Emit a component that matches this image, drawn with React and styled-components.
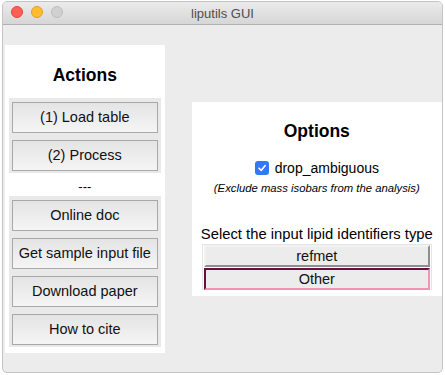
import React, { useState } from "react";
import styled, { createGlobalStyle } from "styled-components";

const GlobalStyle = createGlobalStyle`
  html, body {
    margin: 0;
    padding: 0;
    background: #ffffff;
  }
  body {
    font-family: "Liberation Sans", Arial, sans-serif;
    font-size: 13px;
    color: #000;
  }
`;

const Window = styled.div`
  margin: 1px 2px 2px 2px;
  width: 441px;
  height: 372px;
  box-sizing: border-box;
  border: 1px solid #c4c4c4;
  border-radius: 5px;
  background: #ececec;
  overflow: hidden;
  display: flex;
  flex-direction: column;
`;

const TitleBar = styled.div`
  height: 22px;
  flex: none;
  position: relative;
  display: flex;
  align-items: center;
  justify-content: center;
  background: linear-gradient(#ebebeb, #d6d6d6);
  border-bottom: 1px solid #b1b1b1;
  color: #4d4d4d;
  font-size: 13px;
`;

const Lights = styled.div`
  position: absolute;
  left: 8px;
  top: 4px;
  display: flex;
  gap: 8px;
`;

const Light = styled.span`
  width: 12px;
  height: 12px;
  border-radius: 50%;
  box-sizing: border-box;
  background: ${(p) => p.$color};
  border: 1px solid ${(p) => p.$edge};
`;

const Content = styled.div`
  flex: 1;
  display: flex;
  align-items: center;
  padding-left: 2px;
`;

const Panel = styled.div`
  background: #ffffff;
  display: flex;
  flex-direction: column;
  align-items: center;
  box-sizing: border-box;
`;

const ActionsPanel = styled(Panel)`
  width: 160px;
  height: 308px;
  padding-top: 19px;
`;

const OptionsPanel = styled(Panel)`
  width: 251px;
  height: 194px;
  margin-left: 27px;
  padding-top: 18px;
`;

const Heading = styled.div`
  font-weight: bold;
  font-size: 17.5px;
  line-height: 22px;
  height: 22px;
`;

const Group = styled.div`
  background: #e9e9e9;
  width: 152px;
  box-sizing: border-box;
  padding: 4px 3px 2px;
  display: flex;
  flex-direction: column;
  gap: 7px;
  margin-top: ${(p) => p.$top}px;
`;

const ActionButton = styled.button`
  height: 31px;
  width: 146px;
  box-sizing: border-box;
  border: 1px solid #a8a8a8;
  background: linear-gradient(#e4e4e4, #f5f5f5);
  font-family: "Liberation Sans", Arial, sans-serif;
  font-size: 14.5px;
  color: #111;
  padding: 0;
  cursor: pointer;
`;

const Separator = styled.div`
  line-height: 14px;
  height: 14px;
  margin-top: 7px;
  font-size: 13px;
`;

const CheckRow = styled.label`
  margin-top: 18px;
  display: flex;
  align-items: center;
  gap: 6px;
  height: 16px;
  font-size: 14px;
`;

const CheckBox = styled.span`
  width: 14px;
  height: 14px;
  border-radius: 3px;
  background: #3478f6;
  display: flex;
  align-items: center;
  justify-content: center;
`;

const Note = styled.div`
  margin-top: 5px;
  font-style: italic;
  font-size: 11.3px;
  line-height: 14px;
`;

const SelectLabel = styled.div`
  margin-top: 31px;
  font-size: 14.8px;
  line-height: 16px;
`;

const Choices = styled.div`
  margin-top: 2px;
  display: flex;
  flex-direction: column;
  gap: 1px;
  width: 226px;
  padding: 0 1px;
  border: 1px solid #e4e4e4;
  border-bottom: none;
`;

const Choice = styled.button`
  height: 22px;
  width: 100%;
  box-sizing: border-box;
  background: #ececec;
  border-style: solid;
  border-width: 2px;
  border-color: ${(p) =>
    p.$active
      ? "#6e0b3c #f592b1 #f592b1 #6e0b3c"
      : "#f2f2f2 #8e8e8e #8e8e8e #f2f2f2"};
  font-family: "Liberation Sans", Arial, sans-serif;
  font-size: 14.5px;
  color: #111;
  padding: 0;
  line-height: 16px;
  cursor: pointer;
`;

const actions1 = ["(1) Load table", "(2) Process"];
const actions2 = ["Online doc", "Get sample input file", "Download paper", "How to cite"];

export default function App() {
  const [choice, setChoice] = useState("Other");

  return (
    <>
      <GlobalStyle />
      <Window>
        <TitleBar>
          <Lights>
            <Light $color="#fe5f57" $edge="#e14640" />
            <Light $color="#febc2e" $edge="#dfa023" />
            <Light $color="#d0d0d0" $edge="#bdbdbd" />
          </Lights>
          liputils GUI
        </TitleBar>
        <Content>
          <ActionsPanel>
            <Heading>Actions</Heading>
            <Group $top={12}>
              {actions1.map((a) => (
                <ActionButton key={a}>{a}</ActionButton>
              ))}
            </Group>
            <Separator>---</Separator>
            <Group $top={2}>
              {actions2.map((a) => (
                <ActionButton key={a}>{a}</ActionButton>
              ))}
            </Group>
          </ActionsPanel>
          <OptionsPanel>
            <Heading>Options</Heading>
            <CheckRow>
              <CheckBox>
                <svg width="10" height="10" viewBox="0 0 10 10">
                  <path d="M2 5.2 L4.2 7.4 L8.2 2.6" fill="none" stroke="#fff" strokeWidth="1.6" strokeLinecap="round" strokeLinejoin="round" />
                </svg>
              </CheckBox>
              drop_ambiguous
            </CheckRow>
            <Note>(Exclude mass isobars from the analysis)</Note>
            <SelectLabel>Select the input lipid identifiers type</SelectLabel>
            <Choices>
              {["refmet", "Other"].map((c) => (
                <Choice key={c} $active={choice === c} onClick={() => setChoice(c)}>
                  {c}
                </Choice>
              ))}
            </Choices>
          </OptionsPanel>
        </Content>
      </Window>
    </>
  );
}
